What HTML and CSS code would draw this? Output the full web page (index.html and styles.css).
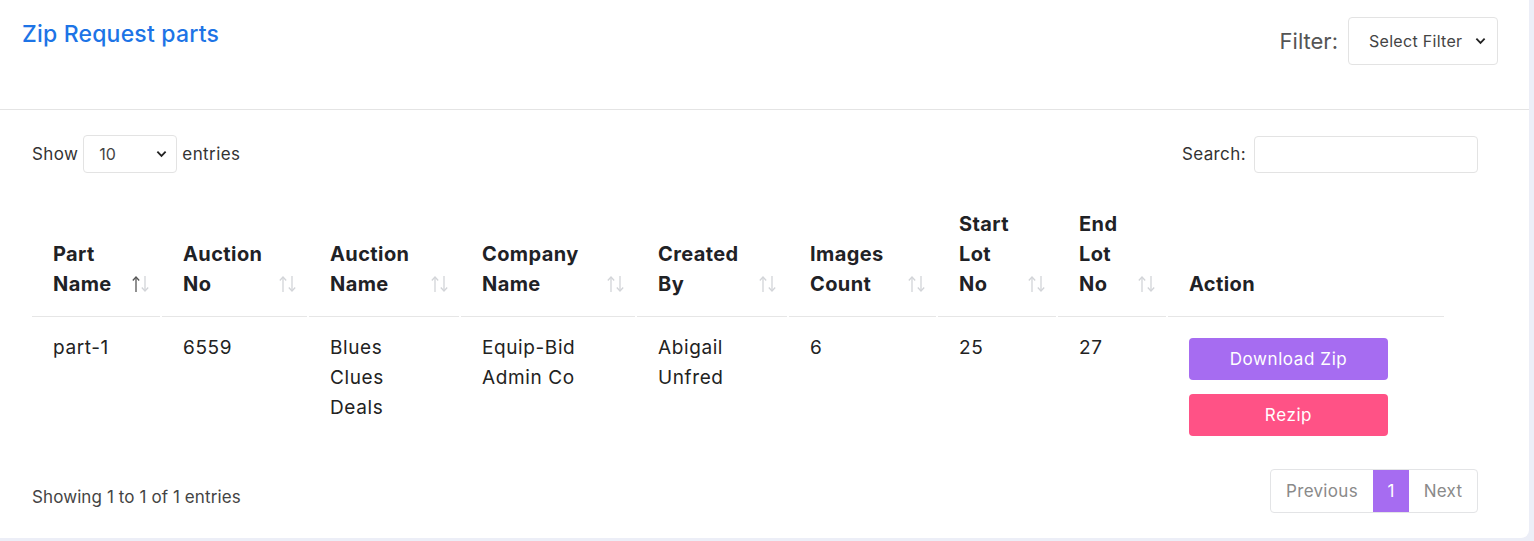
FILE: index.html
```html
<!DOCTYPE html>
<html lang="en">
<head>
<meta charset="utf-8">
<title>Zip Request parts</title>
<link rel="stylesheet" href="styles.css">
</head>
<body>
<div class="page">
  <div class="card">
    <div class="card-header">
      <h1 class="title">Zip Request parts</h1>
      <div class="filter">
        <label class="filter-label" for="flt">Filter:</label>
        <div class="select-wrap filter-select">
          <select id="flt"><option>Select Filter</option></select>
          <svg class="chev" viewBox="0 0 12 8" width="11" height="8"><polyline points="1.5,1.5 6,6 10.5,1.5" fill="none" stroke="#222" stroke-width="2"/></svg>
        </div>
      </div>
    </div>
    <div class="card-body">
      <div class="controls">
        <div class="length">
          <span>Show</span>
          <div class="select-wrap length-select">
            <select><option>10</option></select>
            <svg class="chev" viewBox="0 0 12 8" width="11" height="8"><polyline points="1.5,1.5 6,6 10.5,1.5" fill="none" stroke="#222" stroke-width="2"/></svg>
          </div>
          <span>entries</span>
        </div>
        <div class="search">
          <label for="srch">Search:</label>
          <input id="srch" type="search">
        </div>
      </div>

      <table class="grid">
        <colgroup>
          <col style="width:128px"><col style="width:145px"><col style="width:150px"><col style="width:174px"><col style="width:150px"><col style="width:147px"><col style="width:118px"><col style="width:108px"><col style="width:276px">
        </colgroup>
        <thead>
          <tr>
            <th class="sortable"><span class="lbl">Part Name</span><svg class="sort" viewBox="0 0 20 20"><g class="up on"><line x1="5" y1="3" x2="5" y2="18"/><polyline points="1.8,6.5 5,3 8.2,6.5"/></g><g class="dn"><line x1="14" y1="2" x2="14" y2="17"/><polyline points="10.8,13.5 14,17 17.2,13.5"/></g></svg></th>
            <th class="sortable"><span class="lbl">Auction No</span><svg class="sort" viewBox="0 0 20 20"><g class="up"><line x1="5" y1="3" x2="5" y2="18"/><polyline points="1.8,6.5 5,3 8.2,6.5"/></g><g class="dn"><line x1="14" y1="2" x2="14" y2="17"/><polyline points="10.8,13.5 14,17 17.2,13.5"/></g></svg></th>
            <th class="sortable"><span class="lbl">Auction Name</span><svg class="sort" viewBox="0 0 20 20"><g class="up"><line x1="5" y1="3" x2="5" y2="18"/><polyline points="1.8,6.5 5,3 8.2,6.5"/></g><g class="dn"><line x1="14" y1="2" x2="14" y2="17"/><polyline points="10.8,13.5 14,17 17.2,13.5"/></g></svg></th>
            <th class="sortable"><span class="lbl">Company Name</span><svg class="sort" viewBox="0 0 20 20"><g class="up"><line x1="5" y1="3" x2="5" y2="18"/><polyline points="1.8,6.5 5,3 8.2,6.5"/></g><g class="dn"><line x1="14" y1="2" x2="14" y2="17"/><polyline points="10.8,13.5 14,17 17.2,13.5"/></g></svg></th>
            <th class="sortable"><span class="lbl">Created By</span><svg class="sort" viewBox="0 0 20 20"><g class="up"><line x1="5" y1="3" x2="5" y2="18"/><polyline points="1.8,6.5 5,3 8.2,6.5"/></g><g class="dn"><line x1="14" y1="2" x2="14" y2="17"/><polyline points="10.8,13.5 14,17 17.2,13.5"/></g></svg></th>
            <th class="sortable"><span class="lbl">Images Count</span><svg class="sort" viewBox="0 0 20 20"><g class="up"><line x1="5" y1="3" x2="5" y2="18"/><polyline points="1.8,6.5 5,3 8.2,6.5"/></g><g class="dn"><line x1="14" y1="2" x2="14" y2="17"/><polyline points="10.8,13.5 14,17 17.2,13.5"/></g></svg></th>
            <th class="sortable"><span class="lbl">Start Lot No</span><svg class="sort" viewBox="0 0 20 20"><g class="up"><line x1="5" y1="3" x2="5" y2="18"/><polyline points="1.8,6.5 5,3 8.2,6.5"/></g><g class="dn"><line x1="14" y1="2" x2="14" y2="17"/><polyline points="10.8,13.5 14,17 17.2,13.5"/></g></svg></th>
            <th class="sortable"><span class="lbl">End Lot No</span><svg class="sort" viewBox="0 0 20 20"><g class="up"><line x1="5" y1="3" x2="5" y2="18"/><polyline points="1.8,6.5 5,3 8.2,6.5"/></g><g class="dn"><line x1="14" y1="2" x2="14" y2="17"/><polyline points="10.8,13.5 14,17 17.2,13.5"/></g></svg></th>
            <th><span class="lbl">Action</span></th>
          </tr>
        </thead>
        <tbody>
          <tr>
            <td>part-1</td>
            <td>6559</td>
            <td>Blues Clues Deals</td>
            <td>Equip-Bid Admin Co</td>
            <td>Abigail Unfred</td>
            <td>6</td>
            <td>25</td>
            <td>27</td>
            <td>
              <div class="actions">
                <button class="btn btn-purple">Download Zip</button>
                <button class="btn btn-pink">Rezip</button>
              </div>
            </td>
          </tr>
        </tbody>
      </table>

      <div class="footer">
        <div class="info">Showing 1 to 1 of 1 entries</div>
        <div class="pager">
          <span class="pg pg-prev">Previous</span>
          <span class="pg pg-active">1</span>
          <span class="pg pg-next">Next</span>
        </div>
      </div>
    </div>
  </div>
</div>
</body>
</html>
```

FILE: styles.css
```css
* { box-sizing: border-box; }
html, body { margin: 0; padding: 0; }
body {
  background: #eceef7;
  font-family: "Inter", "Noto Sans", "DejaVu Sans", sans-serif;
  color: #212529;
}
.page { padding-right: 5px; padding-bottom: 3px; }
.card {
  background: #fff;
  border-bottom-right-radius: 8px;
}
.card-header {
  display: flex;
  justify-content: space-between;
  align-items: flex-start;
  height: 110px;
  border-bottom: 1px solid #e4e4e4;
  padding: 0 31px 0 22px;
}
.title {
  margin: 0;
  padding-top: 19px;
  font-size: 23px;
  line-height: 30px;
  font-weight: 500;
  letter-spacing: 0.2px;
  color: #1d74e6;
}
.filter {
  display: flex;
  align-items: center;
  gap: 10px;
  padding-top: 17px;
}
.filter-label { font-size: 22px; color: #555; }
.select-wrap { position: relative; }
.select-wrap select {
  appearance: none;
  -webkit-appearance: none;
  font-family: inherit;
  background: #fff;
  border: 1px solid #e3e3e3;
  border-radius: 4px;
  color: #444;
  display: block;
}
.select-wrap .chev { position: absolute; top: 50%; margin-top: -4px; pointer-events: none; }
.filter-select select {
  width: 150px; height: 48px; font-size: 16px; letter-spacing: 0.3px; padding: 0 20px;
}
.filter-select .chev { right: 12px; }
.length-select select {
  width: 94px; height: 38px; font-size: 16px; padding: 0 15px;
}
.length-select .chev { right: 10px; }

.card-body { padding: 25px 51px 25px 32px; }
.controls {
  display: flex;
  justify-content: space-between;
  align-items: center;
  font-size: 17px;
  letter-spacing: 0.4px;
  color: #333;
}
.length { display: flex; align-items: center; gap: 5px; }
.search { display: flex; align-items: center; gap: 8px; }
.search input {
  width: 224px; height: 37px;
  border: 1px solid #e3e3e3; border-radius: 4px;
  font-family: inherit; font-size: 15px;
}

.grid {
  margin: 19px 0 0 -2px;
  border-collapse: separate;
  border-spacing: 2px 0;
  table-layout: fixed;
  width: 1416px;
}
.grid th {
  position: relative;
  text-align: left;
  vertical-align: bottom;
  font-size: 20px;
  font-weight: 700;
  letter-spacing: 0.4px;
  line-height: 30px;
  color: #1f2226;
  padding: 17px 30px 17px 21px;
  border-bottom: 1px solid #e6e6e6;
}
.grid th .lbl { display: inline-block; width: min-content; }
.grid .sort {
  position: absolute;
  right: 9px;
  bottom: 22px;
  width: 20px;
  height: 20px;
}
.sort g { fill: none; stroke: #d2d4d8; stroke-width: 1.3; }
.sort g.on { stroke: #555; }
.grid td {
  vertical-align: top;
  font-size: 19px;
  letter-spacing: 0.6px;
  line-height: 30px;
  color: #222;
  padding: 16px 28px 15px 21px;
}
.actions { display: flex; flex-direction: column; gap: 14px; padding-top: 5px; }
.btn {
  width: 199px;
  height: 42px;
  border: 0;
  border-radius: 4px;
  color: #fff;
  font-family: inherit;
  font-size: 17px;
  letter-spacing: 0.6px;
}
.btn-purple { background: #a66cf1; }
.btn-pink { background: #ff5286; }

.footer {
  display: flex;
  justify-content: space-between;
  align-items: flex-end;
  margin-top: 18px;
}
.info { font-size: 17px; letter-spacing: 0.1px; line-height: 30px; color: #444; padding-bottom: 1px; }
.pager {
  display: flex;
  border: 1px solid #e3e4e6;
  border-radius: 4px;
  overflow: hidden;
  height: 44px;
  font-size: 17px;
  letter-spacing: 0.3px;
}
.pg {
  display: flex; align-items: center; justify-content: center;
  color: #8a8a8a;
}
.pg-prev { width: 102px; }
.pg-active { width: 36px; background: #a66cf1; color: #fff; }
.pg-next { width: 68px; }
```
